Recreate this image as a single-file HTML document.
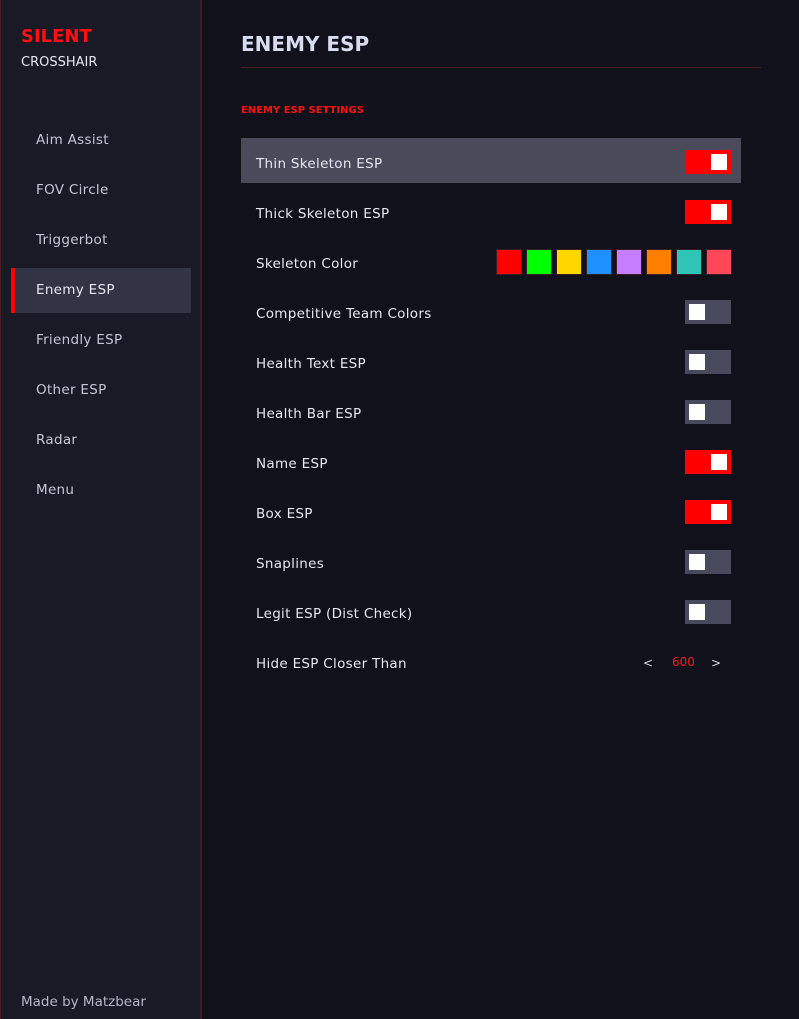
<!DOCTYPE html><html><head><style>
body{margin:0;width:799px;height:1019px;background:#11111b;font-family:"DejaVu Sans","Liberation Sans",sans-serif;position:relative;overflow:hidden;color:#d6d8e6}
.side{position:absolute;left:0;top:0;width:202px;height:1019px;background:#191a26;border-right:2px solid #3a1c24;border-left:1px solid #4a1f24;box-sizing:border-box}
.abs{position:absolute;white-space:nowrap}
.nav{position:absolute;left:36px;font-size:13.5px;color:#c4c6d4;letter-spacing:0.3px}
.row{position:absolute;left:256px;font-size:13.5px;color:#e4e6f0;letter-spacing:0.3px}
.tg{position:absolute;left:685px;width:46px;height:24px;background:#474a5c}
.tg i{position:absolute;top:4px;left:12px;width:16px;height:16px;background:#fff}
.tg.on{background:#ff0000}.tg.on i{left:26px}
.sw{position:absolute;top:250px;width:24px;height:24px;box-shadow:0 0 0 1px #3a1c24}
</style></head><body>
<div class="side"></div>
<div class="abs" style="left:21px;top:26px;font-size:18px;font-weight:bold;color:#ff1010">SILENT</div>
<div class="abs" style="left:21px;top:55px;font-size:13px;color:#e4e6f0">CROSSHAIR</div>
<div class="abs" style="left:11px;top:268px;width:180px;height:45px;background:#323345"></div>
<div class="abs" style="left:11px;top:268px;width:4px;height:45px;background:#ff0000"></div>
<div class="nav" style="top:132px">Aim Assist</div>
<div class="nav" style="top:182px">FOV Circle</div>
<div class="nav" style="top:232px">Triggerbot</div>
<div class="nav" style="top:282px;color:#e4e6f0">Enemy ESP</div>
<div class="nav" style="top:332px">Friendly ESP</div>
<div class="nav" style="top:382px">Other ESP</div>
<div class="nav" style="top:432px">Radar</div>
<div class="nav" style="top:482px">Menu</div>
<div class="abs" style="left:21px;top:994px;font-size:13.5px;color:#b4b6c6">Made by Matzbear</div>
<div class="abs" style="left:241px;top:32px;font-size:20px;font-weight:bold;color:#d8dcf0">ENEMY ESP</div>
<div class="abs" style="left:241px;top:67px;width:520px;height:1px;background:#4a2028"></div>
<div class="abs" style="left:241px;top:105px;font-size:10px;font-weight:bold;color:#ff1010">ENEMY ESP SETTINGS</div>
<div class="abs" style="left:241px;top:138px;width:500px;height:45px;background:#4a4a5a"></div>
<div class="row" style="top:156px">Thin Skeleton ESP</div>
<div class="row" style="top:206px">Thick Skeleton ESP</div>
<div class="row" style="top:256px">Skeleton Color</div>
<div class="row" style="top:306px">Competitive Team Colors</div>
<div class="row" style="top:356px">Health Text ESP</div>
<div class="row" style="top:406px">Health Bar ESP</div>
<div class="row" style="top:456px">Name ESP</div>
<div class="row" style="top:506px">Box ESP</div>
<div class="row" style="top:556px">Snaplines</div>
<div class="row" style="top:606px">Legit ESP (Dist Check)</div>
<div class="row" style="top:656px">Hide ESP Closer Than</div>
<div class="tg on" style="top:150px"><i></i></div>
<div class="tg on" style="top:200px"><i></i></div>
<div class="tg" style="top:300px"><i style="left:4px"></i></div>
<div class="tg" style="top:350px"><i style="left:4px"></i></div>
<div class="tg" style="top:400px"><i style="left:4px"></i></div>
<div class="tg on" style="top:450px"><i></i></div>
<div class="tg on" style="top:500px"><i></i></div>
<div class="tg" style="top:550px"><i style="left:4px"></i></div>
<div class="tg" style="top:600px"><i style="left:4px"></i></div>
<div class="sw" style="left:497px;background:#ff0000"></div>
<div class="sw" style="left:527px;background:#00ff00"></div>
<div class="sw" style="left:557px;background:#ffd700"></div>
<div class="sw" style="left:587px;background:#1e90ff"></div>
<div class="sw" style="left:617px;background:#c77dff"></div>
<div class="sw" style="left:647px;background:#ff7f00"></div>
<div class="sw" style="left:677px;background:#2ec4b6"></div>
<div class="sw" style="left:707px;background:#ff4757"></div>
<div class="abs" style="left:643px;top:656px;font-size:12px;color:#d6d8e6">&lt;</div>
<div class="abs" style="left:672px;top:655px;font-size:12px;color:#ff1a1a">600</div>
<div class="abs" style="left:711px;top:656px;font-size:12px;color:#d6d8e6">&gt;</div>
</body></html>
